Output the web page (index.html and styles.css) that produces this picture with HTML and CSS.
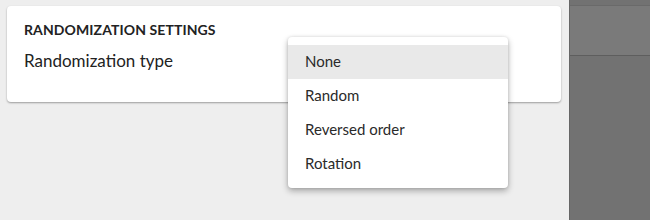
FILE: index.html
```html
<!DOCTYPE html>
<html lang="en">

<head>
  <meta charset="UTF-8">
  <title>Randomization settings</title>
  <link rel="stylesheet" href="styles.css">
</head>

<body>
  <div class="layout">
    <div class="main">
      <div class="card">
        <h2 class="card-title">Randomization settings</h2>
        <div class="field-label">Randomization type</div>
      </div>

      <!-- open select menu -->
      <ul class="menu">
        <li class="menu-item active">None</li>
        <li class="menu-item">Random</li>
        <li class="menu-item">Reversed order</li>
        <li class="menu-item">Rotation</li>
      </ul>
    </div>

    <div class="side">
      <div class="side-top"></div>
      <div class="side-bottom"></div>
    </div>
  </div>
</body>

</html>
```

FILE: styles.css
```css
body {
  margin: 0;
  font-family: Lato, "Open Sans", sans-serif;
  color: #222;
  background-color: #eeeeee;
}

.layout {
  display: flex;
  height: 220px;
}

.main {
  position: relative;
  width: 569px;
  padding: 6px 8px 0 7px;
  box-sizing: border-box;
}

.card {
  background-color: #fff;
  border-radius: 4px;
  height: 96px;
  padding: 15px 17px 0 17px;
  box-sizing: border-box;
  box-shadow: 0 1px 2px rgba(0, 0, 0, 0.35);
}

.card-title {
  margin: 0;
  font-size: 14px;
  font-weight: 700;
  text-transform: uppercase;
  letter-spacing: 0.1px;
  line-height: 18px;
}

.field-label {
  margin-top: 12px;
  font-size: 17px;
  line-height: 20px;
}

.menu {
  position: absolute;
  left: 288px;
  top: 37px;
  width: 220px;
  margin: 0;
  padding: 8px 0 7px 0;
  list-style: none;
  background-color: #fff;
  border-radius: 4px;
  box-shadow: 0 3px 6px rgba(0, 0, 0, 0.3), 0 0 3px rgba(0, 0, 0, 0.12);
}

.menu-item {
  height: 34px;
  line-height: 33px;
  padding-left: 17px;
  font-size: 15px;
  color: #2a2a2a;
}

.menu-item.active {
  background-color: #e9e9e9;
}

.side {
  flex: 1;
  display: flex;
  flex-direction: column;
  background-color: #727272;
  border-left: 1px solid #666;
}

.side-top {
  height: 49px;
  margin-top: 5px;
  background-color: #7a7a7a;
  border-top: 1px solid #6a6a6a;
  border-bottom: 1px solid #5e5e5e;
}

.side-bottom {
  flex: 1;
}
```
